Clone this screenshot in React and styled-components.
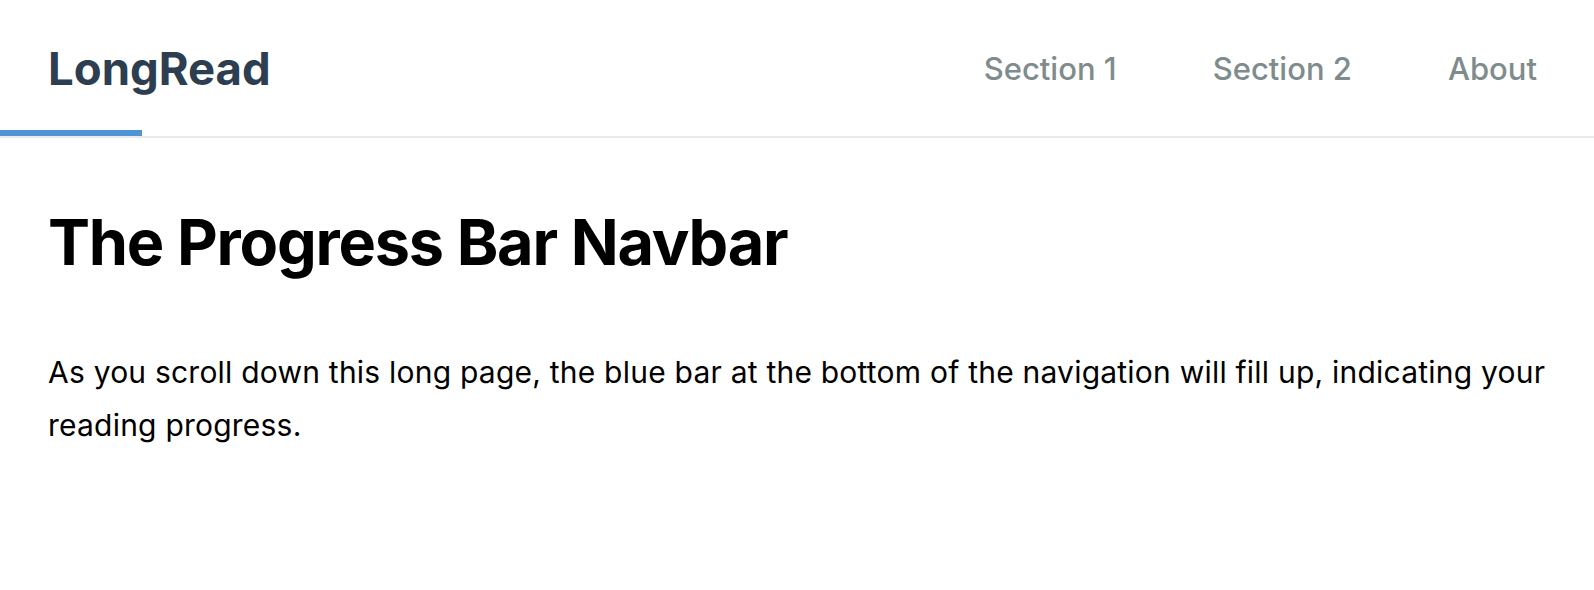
import React from 'react';
import styled, { createGlobalStyle } from 'styled-components';

const GlobalStyle = createGlobalStyle`
  html, body {
    margin: 0;
    padding: 0;
    background: #ffffff;
    font-family: Inter, "Noto Sans", sans-serif;
  }
`

const Nav = styled.nav`
  position: relative;
  height: 136px;
  display: flex;
  align-items: center;
  justify-content: space-between;
  padding: 0 57px 0 48px;
  border-bottom: 2px solid #ebebeb;
  background: #ffffff;
`
const Logo = styled.a`
  font-size: 45.5px;
  font-weight: 700;
  color: #2c3e50;
  text-decoration: none;
`
const Links = styled.div`
  display: flex;
  align-items: center;
  gap: 96px;
`
const NavLink = styled.a`
  font-size: 31px;
  font-weight: 500;
  color: #7f8c8d;
  text-decoration: none;
`
const Progress = styled.div`
  position: absolute;
  left: 0;
  bottom: 0;
  height: 6px;
  background: #4f95d6;
`
const Main = styled.main`
  padding: 66px 40px 0 48px;
`
const Title = styled.h1`
  margin: 0 0 66px;
  font-size: 63px;
  font-weight: 700;
  color: #000;
  letter-spacing: -1.2px;
`
const Text = styled.p`
  margin: 0;
  font-size: 30px;
  line-height: 53px;
  letter-spacing: 0.22px;
  color: #000;
`

const App = () => {
  const progress = 142;
  return (
    <>
      <GlobalStyle/>
      <Nav>
        <Logo href="#">LongRead</Logo>
        <Links>
          <NavLink href="#section1">Section 1</NavLink>
          <NavLink href="#section2">Section 2</NavLink>
          <NavLink href="#about">About</NavLink>
        </Links>
        <Progress style={{ width: progress }}/>
      </Nav>
      <Main>
        <Title>The Progress Bar Navbar</Title>
        <Text>
          As you scroll down this long page, the blue bar at the bottom of the navigation will fill up, indicating your reading progress.
        </Text>
      </Main>
    </>
  );
}

export default App;
